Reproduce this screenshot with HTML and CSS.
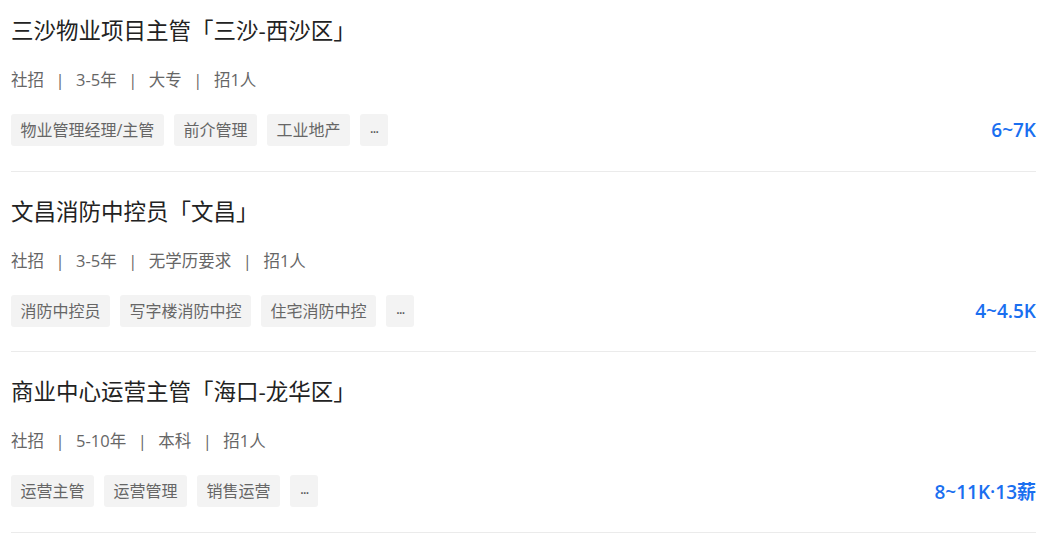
FILE: index.html
```html
<!doctype html>
<html>
<head>
    <meta charset="utf-8">
    <title>职位列表</title>
    <link rel="stylesheet" href="styles.css">
</head>

<body>
<ul class="job_list">
    <li class="job">
        <h3 class="job_title">三沙物业项目主管「三沙-西沙区」</h3>
        <p class="job_info">
            <span>社招</span><i>|</i><span>3-5年</span><i>|</i><span>大专</span><i>|</i><span>招1人</span>
        </p>
        <div class="job_foot">
            <div class="tags">
                <span>物业管理经理/主管</span>
                <span>前介管理</span>
                <span>工业地产</span>
                <span class="more">···</span>
            </div>
            <em class="salary">6~7K</em>
        </div>
    </li>
    <li class="job">
        <h3 class="job_title">文昌消防中控员「文昌」</h3>
        <p class="job_info">
            <span>社招</span><i>|</i><span>3-5年</span><i>|</i><span>无学历要求</span><i>|</i><span>招1人</span>
        </p>
        <div class="job_foot">
            <div class="tags">
                <span>消防中控员</span>
                <span>写字楼消防中控</span>
                <span>住宅消防中控</span>
                <span class="more">···</span>
            </div>
            <em class="salary">4~4.5K</em>
        </div>
    </li>
    <li class="job">
        <h3 class="job_title">商业中心运营主管「海口-龙华区」</h3>
        <p class="job_info">
            <span>社招</span><i>|</i><span>5-10年</span><i>|</i><span>本科</span><i>|</i><span>招1人</span>
        </p>
        <div class="job_foot">
            <div class="tags">
                <span>运营主管</span>
                <span>运营管理</span>
                <span>销售运营</span>
                <span class="more">···</span>
            </div>
            <em class="salary">8~11K·13薪</em>
        </div>
    </li>
</ul>
</body>

</html>
```

FILE: styles.css
```css
body,
ul,
h3,
p {
    margin: 0;
    padding: 0;
}

body {
    font-family: "Open Sans", "Noto Sans CJK SC", sans-serif;
    background: #fff;
}

li {
    list-style: none;
}

.job_list {
    padding: 0 15px 0 11px;
}

.job {
    padding: 25px 0 24.5px;
    border-bottom: 1px solid #ebebeb;
}

/*第一项顶部被裁掉一点*/
.job:first-child {
    padding-top: 16px;
}

.job_title {
    font-size: 22.5px;
    line-height: 30px;
    font-weight: normal;
    color: #222;
}

.job_info {
    margin-top: 22px;
    font-size: 16.5px;
    line-height: 24px;
    color: #666;
}

.job_info i {
    font-style: normal;
    margin: 0 11.5px;
}

.job_foot {
    margin-top: 22px;
    display: flex;
    align-items: center;
    justify-content: space-between;
}

.tags {
    display: flex;
    gap: 10px;
}

.tags span {
    height: 32px;
    line-height: 32px;
    padding: 0 9.5px;
    font-size: 16px;
    color: #666;
    background-color: #f3f3f3;
    border-radius: 3px;
}

.tags .more {
    width: 28px;
    padding: 0;
    text-align: center;
    font-size: 15px;
    letter-spacing: -1.2px;
    line-height: 34px;
    color: #555;
}

.salary {
    font-style: normal;
    font-size: 19px;
    font-weight: 600;
    color: #1a6ff0;
}
```
